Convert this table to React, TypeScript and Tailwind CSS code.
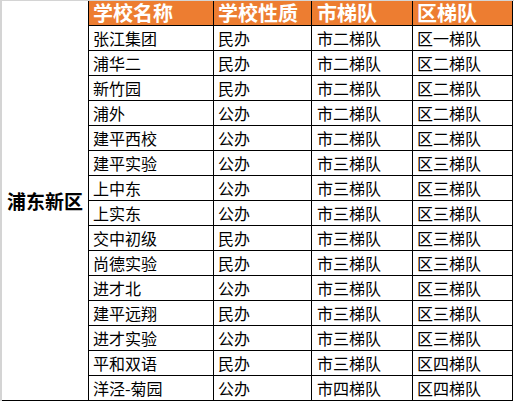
import React from "react";

const rows: [string, string, string, string][] = [
  ["张江集团", "民办", "市二梯队", "区一梯队"],
  ["浦华二", "民办", "市二梯队", "区二梯队"],
  ["新竹园", "民办", "市二梯队", "区二梯队"],
  ["浦外", "公办", "市二梯队", "区二梯队"],
  ["建平西校", "公办", "市二梯队", "区二梯队"],
  ["建平实验", "公办", "市三梯队", "区三梯队"],
  ["上中东", "公办", "市三梯队", "区三梯队"],
  ["上实东", "公办", "市三梯队", "区三梯队"],
  ["交中初级", "民办", "市三梯队", "区三梯队"],
  ["尚德实验", "民办", "市三梯队", "区三梯队"],
  ["进才北", "公办", "市三梯队", "区三梯队"],
  ["建平远翔", "民办", "市三梯队", "区三梯队"],
  ["进才实验", "公办", "市三梯队", "区三梯队"],
  ["平和双语", "民办", "市三梯队", "区四梯队"],
  ["洋泾-菊园", "公办", "市四梯队", "区四梯队"],
];

const headers = ["学校名称", "学校性质", "市梯队", "区梯队"];
const pads = ["pl-1", "pl-1", "pl-[5px]", "pl-1"];

export default function App() {
  return (
    <div
      className="w-[514px] h-[401px] bg-white flex border-t border-l-2 border-[#d4d4d4]"
      style={{ fontFamily: '"Noto Sans CJK SC", sans-serif' }}
    >
      <div className="w-[87px] h-[400px] border-r border-b border-black flex items-center justify-center">
        <span className="text-[19px] font-bold text-black leading-[24px]">浦东新区</span>
      </div>
      <div className="grid grid-cols-[125px_98px_101px_100px] auto-rows-[25px]">
        {headers.map((h, i) => (
          <div
            key={h}
            className={`h-[25px] bg-[#ED7D31] border-r border-b border-black flex items-center ${pads[i]} text-white text-[20px] font-bold leading-[24px] whitespace-nowrap`}
          >
            {h}
          </div>
        ))}
        {rows.map((r, ri) =>
          r.map((c, ci) => (
            <div
              key={`${ri}-${ci}`}
              className={`h-[25px] border-r border-b border-black flex items-center ${pads[ci]} text-black text-[16px] leading-[24px] whitespace-nowrap`}
            >
              {c}
            </div>
          ))
        )}
      </div>
    </div>
  );
}
